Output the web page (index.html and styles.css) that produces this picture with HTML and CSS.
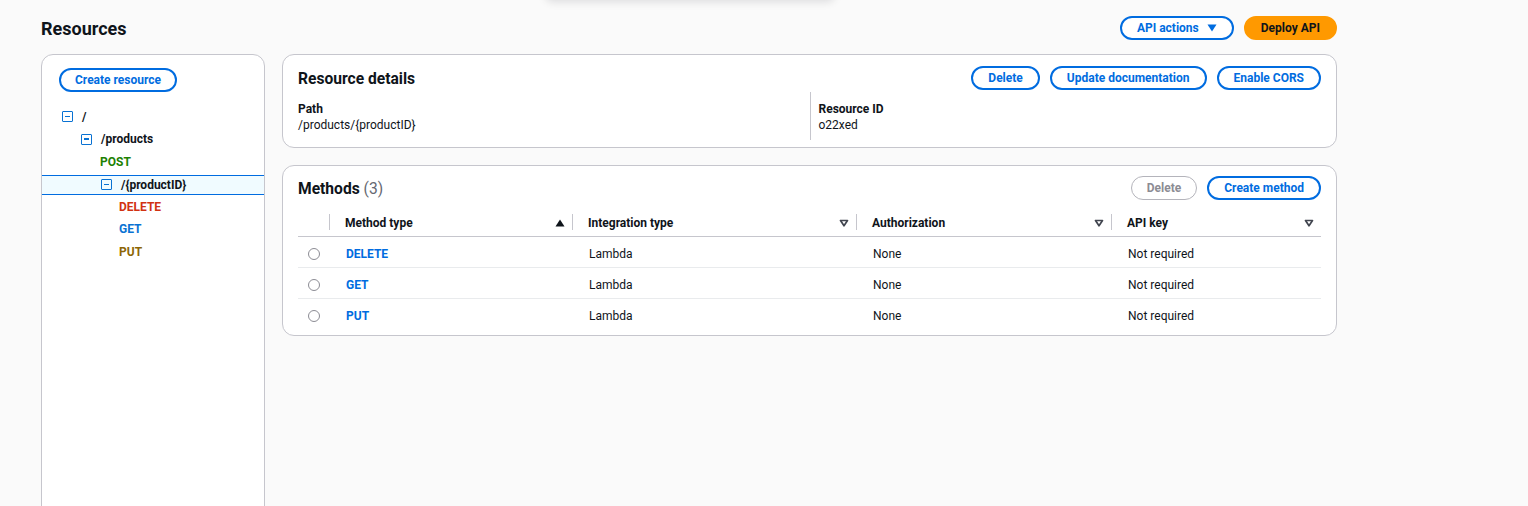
FILE: index.html
```html
<!DOCTYPE html>
<html lang="en">
<head>
<meta charset="utf-8">
<title>Resources</title>
<link rel="stylesheet" href="styles.css">
</head>
<body>
<div class="toast-shadow"></div>
<div class="page">
  <header class="page-header">
    <h1 class="page-title">Resources</h1>
    <div class="actions">
      <button class="btn">API actions <svg class="caret" width="10" height="8" viewBox="0 0 10 8"><path d="M0.5 0.5h9L5 7.5z" fill="#006ce0"/></svg></button>
      <button class="btn btn-primary">Deploy API</button>
    </div>
  </header>

  <div class="layout">
    <aside class="tree-panel">
      <div class="tree-top"><button class="btn">Create resource</button></div>
      <ul class="tree">
        <li class="node lvl0"><span class="toggle"></span><span class="path">/</span></li>
        <li class="node lvl1"><span class="toggle"></span><span class="path">/products</span></li>
        <li class="node lvl2 m-post">POST</li>
        <li class="node lvl2b selected"><span class="toggle"></span><span class="path">/{productID}</span></li>
        <li class="node lvl3 m-delete">DELETE</li>
        <li class="node lvl3 m-get">GET</li>
        <li class="node lvl3 m-put">PUT</li>
      </ul>
    </aside>

    <main class="content">
      <section class="panel details">
        <div class="panel-head">
          <h2 class="panel-title">Resource details</h2>
          <div class="actions">
            <button class="btn">Delete</button>
            <button class="btn">Update documentation</button>
            <button class="btn">Enable CORS</button>
          </div>
        </div>
        <div class="kv">
          <div class="kv-col">
            <div class="kv-label">Path</div>
            <div class="kv-value">/products/{productID}</div>
          </div>
          <div class="kv-col kv-divided">
            <div class="kv-label">Resource ID</div>
            <div class="kv-value">o22xed</div>
          </div>
        </div>
      </section>

      <section class="panel methods">
        <div class="panel-head">
          <h2 class="panel-title">Methods <span class="count">(3)</span></h2>
          <div class="actions">
            <button class="btn btn-disabled">Delete</button>
            <button class="btn">Create method</button>
          </div>
        </div>
        <div class="table">
          <div class="tr thead">
            <div class="th th-select"></div>
            <div class="th sep"><span>Method type</span><svg class="sort" width="10" height="8" viewBox="0 0 10 8"><path d="M5 0.5L9.5 7.5h-9z" fill="#0f141a"/></svg></div>
            <div class="th sep"><span>Integration type</span><svg class="sort" width="10" height="8" viewBox="0 0 10 8"><path d="M1.5 1.5h7L5 6.8z" fill="none" stroke="#424650" stroke-width="1.7" stroke-linejoin="round"/></svg></div>
            <div class="th sep"><span>Authorization</span><svg class="sort" width="10" height="8" viewBox="0 0 10 8"><path d="M1.5 1.5h7L5 6.8z" fill="none" stroke="#424650" stroke-width="1.7" stroke-linejoin="round"/></svg></div>
            <div class="th sep"><span>API key</span><svg class="sort" width="10" height="8" viewBox="0 0 10 8"><path d="M1.5 1.5h7L5 6.8z" fill="none" stroke="#424650" stroke-width="1.7" stroke-linejoin="round"/></svg></div>
          </div>
          <div class="tr">
            <div class="td td-select"><span class="radio"></span></div>
            <div class="td"><a class="mlink">DELETE</a></div>
            <div class="td">Lambda</div>
            <div class="td">None</div>
            <div class="td">Not required</div>
          </div>
          <div class="tr">
            <div class="td td-select"><span class="radio"></span></div>
            <div class="td"><a class="mlink">GET</a></div>
            <div class="td">Lambda</div>
            <div class="td">None</div>
            <div class="td">Not required</div>
          </div>
          <div class="tr last">
            <div class="td td-select"><span class="radio"></span></div>
            <div class="td"><a class="mlink">PUT</a></div>
            <div class="td">Lambda</div>
            <div class="td">None</div>
            <div class="td">Not required</div>
          </div>
        </div>
      </section>
    </main>
  </div>
</div>
</body>
</html>
```

FILE: styles.css
```css
* { box-sizing: border-box; }
html, body { margin: 0; padding: 0; }
body {
  background: #fafafa;
  font-family: Roboto, "Liberation Sans", Arial, sans-serif;
  font-size: 12px;
  color: #0f141a;
  overflow: hidden;
  height: 506px;
}
.toast-shadow {
  position: absolute;
  left: 545px;
  top: -30px;
  width: 290px;
  height: 30px;
  background: #fff;
  box-shadow: 0 2px 8px rgba(0, 7, 22, 0.12);
  border-radius: 8px;
}
.page {
  width: 1337px;
  padding-left: 41px;
}
.page-header {
  display: flex;
  align-items: center;
  justify-content: space-between;
  height: 24px;
  margin-top: 16px;
}
.page-title {
  margin: 0;
  font-size: 18px;
  font-weight: 700;
  line-height: 24px;
  padding-top: 2px;
}
.actions {
  display: flex;
  gap: 10px;
  align-items: center;
}
.btn {
  font-family: inherit;
  font-size: 12px;
  font-weight: 700;
  color: #006ce0;
  background: #fff;
  border: 2px solid #006ce0;
  border-radius: 14px;
  height: 24px;
  padding: 0 15px;
  display: inline-flex;
  align-items: center;
  gap: 8px;
  line-height: 1;
  cursor: pointer;
}
.tree-top .btn { padding: 0 14px; }
.btn-primary {
  background: #ff9900;
  border-color: #ff9900;
  color: #0f141a;
}
.btn-disabled {
  color: #8c8c94;
  border-color: #b4b4bb;
  border-width: 1.5px;
}
.caret { display: block; }

.layout {
  display: grid;
  grid-template-columns: 224px 1055px;
  gap: 17px;
  margin-top: 14px;
}
.tree-panel {
  background: #fff;
  border: 1px solid #c6c6cd;
  border-radius: 12px;
  height: 480px;
}
.tree-top {
  padding: 13px 0 0 17px;
}
.tree {
  list-style: none;
  margin: 13px 0 0;
  padding: 0;
}
.node {
  height: 22.5px;
  display: flex;
  align-items: center;
  gap: 9px;
  font-weight: 700;
  font-size: 12px;
}
.lvl0 { padding-left: 20px; }
.lvl1 { padding-left: 39px; }
.lvl2 { padding-left: 58px; }
.lvl2b { padding-left: 59px; }
.lvl3 { padding-left: 77px; }
.node.lvl0 { height: 23px; }
.node.selected {
  height: 20px;
  margin: 1.5px 0 1px;
  background: #f0fbff;
  border-top: 1px solid #006ce0;
  border-bottom: 1px solid #006ce0;
}
.toggle {
  width: 11px;
  height: 11px;
  border: 1.5px solid #0972d3;
  border-radius: 1px;
  position: relative;
  flex: none;
}
.toggle::after {
  content: "";
  position: absolute;
  left: 2px;
  right: 2px;
  top: 3.5px;
  height: 1.5px;
  background: #0972d3;
}
.m-post { color: #1d8102; }
.m-delete { color: #d13212; }
.m-get { color: #0972d3; }
.m-put { color: #8d6605; }

.content {
  display: flex;
  flex-direction: column;
  gap: 17px;
}
.panel {
  background: #fff;
  border: 1px solid #c6c6cd;
  border-radius: 12px;
  padding: 0 15px;
}
.panel-head {
  display: flex;
  justify-content: space-between;
  align-items: center;
  height: 24px;
}
.details { padding-top: 11px; padding-bottom: 7px; }
.methods { padding-top: 10px; padding-bottom: 5px; }
.panel-title {
  margin: 0;
  font-size: 15.6px;
  font-weight: 700;
  line-height: 24px;
  padding-top: 1px;
}
.count { font-weight: 400; color: #656871; }
.kv {
  display: grid;
  grid-template-columns: 1fr 1fr;
  margin-top: 2px;
}
.kv-col { padding: 9px 0 7px; }
.kv-divided {
  border-left: 1px solid #c6c6cd;
  padding-left: 8px;
}
.kv-label { font-weight: 700; line-height: 16px; }
.kv-value { line-height: 16px; }

.table { margin-top: 7px; }
.tr {
  display: grid;
  grid-template-columns: 31px 243px 284px 255px 1fr;
  height: 31px;
  align-items: center;
  border-bottom: 1px solid #e9ebed;
  padding-top: 3px;
}
.tr.last { border-bottom: none; }
.thead {
  height: 30px;
  border-bottom: 1px solid #c6c6cd;
  padding-top: 0;
}
.th {
  font-weight: 700;
  display: flex;
  align-items: center;
  justify-content: space-between;
  padding: 2px 7px 0 16px;
  position: relative;
  height: 100%;
}
.th.sep::before {
  content: "";
  position: absolute;
  left: 0;
  top: 7px;
  bottom: 6px;
  width: 1px;
  background: #c6c6cd;
}
.sort { display: block; }
.td { padding-left: 17px; }
.td-select { padding-left: 10px; display: flex; align-items: center; }
.radio {
  width: 12px;
  height: 12px;
  border-radius: 50%;
  border: 1px solid #8c8c94;
  background: #fff;
  display: block;
}
.mlink {
  color: #006ce0;
  font-weight: 700;
}
```
